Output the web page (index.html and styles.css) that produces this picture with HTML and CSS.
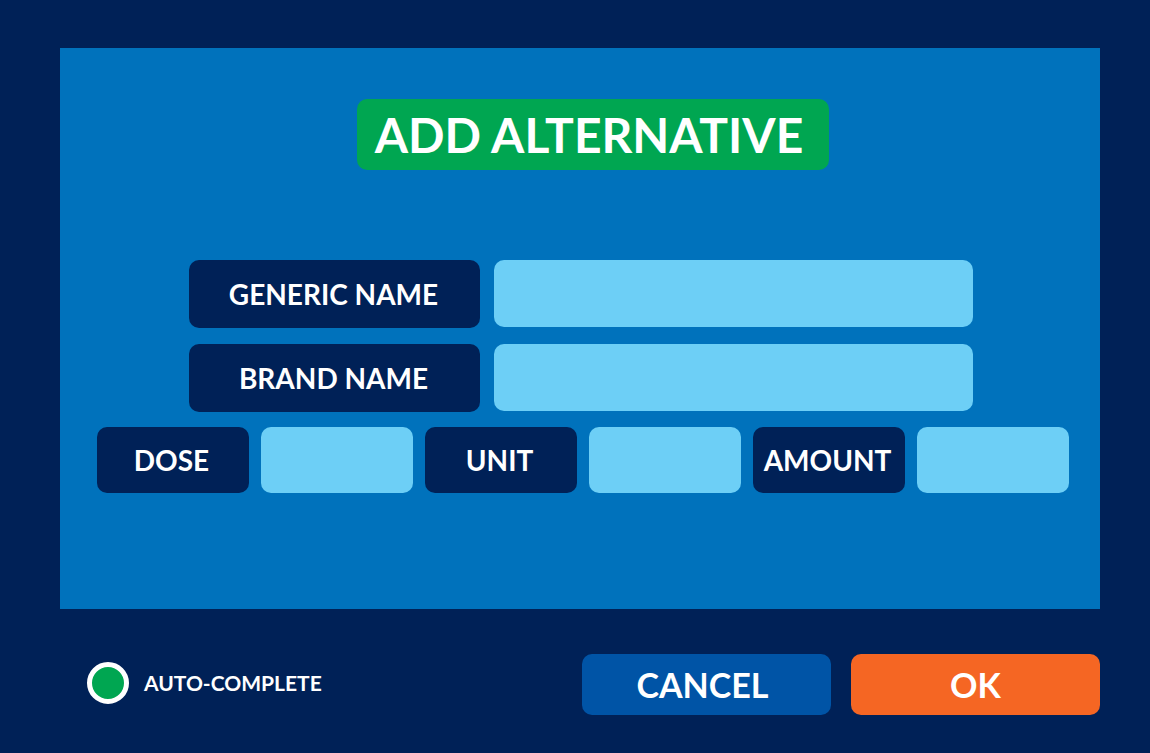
FILE: index.html
```html
<!DOCTYPE html>
<html lang="en">
<head>
<meta charset="utf-8">
<title>Add Alternative</title>
<link rel="stylesheet" href="styles.css">
</head>
<body>
<form class="dialog">
  <main class="panel">
    <h1 class="title">ADD ALTERNATIVE</h1>
    <div class="names">
      <div class="name-row">
        <label class="label" for="generic">GENERIC NAME</label>
        <input class="field" id="generic" type="text">
      </div>
      <div class="name-row">
        <label class="label" for="brand">BRAND NAME</label>
        <input class="field" id="brand" type="text">
      </div>
    </div>
    <div class="measures">
      <div class="pair">
        <label class="label" for="dose">DOSE</label>
        <input class="field" id="dose" type="text">
      </div>
      <div class="pair">
        <label class="label" for="unit">UNIT</label>
        <input class="field" id="unit" type="text">
      </div>
      <div class="pair">
        <label class="label" for="amount">AMOUNT</label>
        <input class="field" id="amount" type="text">
      </div>
    </div>
  </main>
  <footer class="footer">
    <label class="auto"><input class="radio" type="radio" name="auto" checked>AUTO-COMPLETE</label>
    <div class="actions">
      <button class="button cancel" type="button">CANCEL</button>
      <button class="button ok" type="submit">OK</button>
    </div>
  </footer>
</form>
</body>
</html>
```
FILE: styles.css
```css
* {
  box-sizing: border-box;
}

body {
  margin: 0;
  background: #002157;
  color: #fff;
  font-family: "Century Gothic", "Lato", sans-serif;
  font-weight: 700;
}

.dialog {
  min-height: 100vh;
  padding: 48px 50px 38px 60px;
}

.panel {
  display: flex;
  flex-direction: column;
  align-items: center;
  background: #0072bc;
  padding: 51px 31px 116px 37px;
}

.title {
  margin: 0 0 90px 20px;
  padding: 1px 24px 0 16px;
  min-width: 472px;
  border-radius: 10px;
  background: #00a651;
  font-size: 48px;
  line-height: 70px;
  text-align: center;
  white-space: nowrap;
}

.names {
  display: grid;
  gap: 16px;
  width: 100%;
  max-width: 784px;
  margin: 0 4px 15px 0;
}

.name-row {
  display: grid;
  grid-template-columns: 291fr 479fr;
  gap: 14px;
}

.label {
  display: flex;
  align-items: center;
  justify-content: center;
  min-height: 66px;
  border-radius: 10px;
  background: #002157;
  font-size: 28px;
  line-height: 36px;
  white-space: nowrap;
}

.name-row .label {
  min-height: 68px;
  padding-right: 2px;
}

.field {
  width: 100%;
  min-width: 0;
  height: 66px;
  padding: 0 16px;
  border: 0;
  border-radius: 10px;
  background: #6dcff6;
  color: #002157;
  font: inherit;
  font-size: 28px;
}

.name-row .field {
  height: 67px;
}

.measures {
  display: grid;
  grid-template-columns: repeat(3, 1fr);
  gap: 12px;
  width: 100%;
}

.pair {
  display: grid;
  grid-template-columns: 1fr 1fr;
  gap: 12px;
}

.pair .label {
  padding-right: 3px;
}

.footer {
  display: flex;
  align-items: center;
  justify-content: space-between;
  margin-top: 45px;
  padding-left: 27px;
}

.auto {
  display: flex;
  align-items: center;
  gap: 15px;
  margin-bottom: 4px;
  font-size: 21px;
  line-height: 28px;
}

.radio {
  appearance: none;
  width: 42px;
  height: 42px;
  margin: 0;
  border: 5px solid #fff;
  border-radius: 50%;
  background: #00a651;
}

.actions {
  display: flex;
  gap: 20px;
}

.button {
  width: 249px;
  height: 61px;
  padding: 0;
  border: 0;
  border-radius: 10px;
  color: #fff;
  font: inherit;
  font-size: 34px;
  line-height: 42px;
}

.cancel {
  padding-right: 8px;
  background: #0054a6;
}

.ok {
  background: #f56623;
}
```
